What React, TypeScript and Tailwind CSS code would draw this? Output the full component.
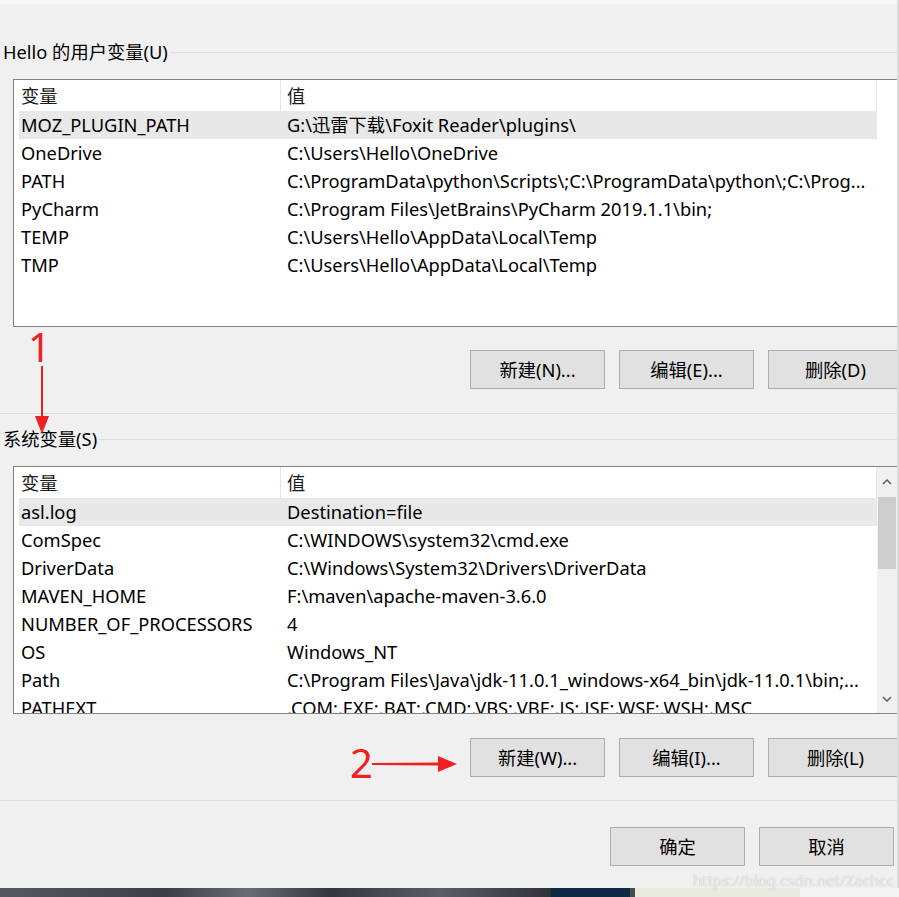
import React from "react";

type Row = { name: string; value: string };

const userVars: Row[] = [
  { name: "MOZ_PLUGIN_PATH", value: "G:\\迅雷下载\\Foxit Reader\\plugins\\" },
  { name: "OneDrive", value: "C:\\Users\\Hello\\OneDrive" },
  { name: "PATH", value: "C:\\ProgramData\\python\\Scripts\\;C:\\ProgramData\\python\\;C:\\Prog..." },
  { name: "PyCharm", value: "C:\\Program Files\\JetBrains\\PyCharm 2019.1.1\\bin;" },
  { name: "TEMP", value: "C:\\Users\\Hello\\AppData\\Local\\Temp" },
  { name: "TMP", value: "C:\\Users\\Hello\\AppData\\Local\\Temp" },
];

const systemVars: Row[] = [
  { name: "asl.log", value: "Destination=file" },
  { name: "ComSpec", value: "C:\\WINDOWS\\system32\\cmd.exe" },
  { name: "DriverData", value: "C:\\Windows\\System32\\Drivers\\DriverData" },
  { name: "MAVEN_HOME", value: "F:\\maven\\apache-maven-3.6.0" },
  { name: "NUMBER_OF_PROCESSORS", value: "4" },
  { name: "OS", value: "Windows_NT" },
  { name: "Path", value: "C:\\Program Files\\Java\\jdk-11.0.1_windows-x64_bin\\jdk-11.0.1\\bin;..." },
  { name: "PATHEXT", value: ".COM;.EXE;.BAT;.CMD;.VBS;.VBE;.JS;.JSE;.WSF;.WSH;.MSC" },
];

function GroupLabel({ text }: { text: string }) {
  return (
    <div className="flex h-[20px] items-center">
      <span className="pl-[3px] pr-[2px] leading-[20px]">{text}</span>
      <div className="h-px flex-1 bg-[#dcdcdc]" />
    </div>
  );
}

function VarList({ rows, scroll }: { rows: Row[]; scroll?: boolean }) {
  return (
    <div className="ml-[13px] flex h-[248px] w-[886px] shrink-0 overflow-hidden border border-[#828282] bg-white">
      <div className="w-[863px] shrink-0">
        <div className="flex h-[31px] items-center text-[#1a1a1a]">
          <div className="w-[266px] pl-[7px]">变量</div>
          <div className="h-full w-px bg-[#e5e5e5]" />
          <div className="flex-1 pl-[6px]">值</div>
          <div className="h-full w-px bg-[#e5e5e5]" />
        </div>
        {rows.map((r, i) => (
          <div
            key={r.name}
            className={
              "ml-[5px] flex h-[28px] items-center whitespace-nowrap " +
              (i === 0 ? "bg-[#e8e8e8]" : "")
            }
          >
            <div className="w-[262px] shrink-0 overflow-hidden pl-[2px]">{r.name}</div>
            <div className="flex-1 overflow-hidden pl-[6px]">{r.value}</div>
          </div>
        ))}
      </div>
      {scroll && (
        <div className="flex w-[20px] shrink-0 flex-col bg-[#f0f0f0]">
          <div className="flex h-[30px] items-center justify-center">
            <svg width="10" height="6" viewBox="0 0 10 6">
              <path d="M1 5 L5 1 L9 5" fill="none" stroke="#606060" strokeWidth="1.5" />
            </svg>
          </div>
          <div className="mx-[1px] h-[72px] bg-[#cdcdcd]" />
          <div className="flex-1" />
          <div className="flex h-[28px] items-center justify-center">
            <svg width="10" height="6" viewBox="0 0 10 6">
              <path d="M1 1 L5 5 L9 1" fill="none" stroke="#606060" strokeWidth="1.5" />
            </svg>
          </div>
        </div>
      )}
    </div>
  );
}

function Btn({ label }: { label: string }) {
  return (
    <div className="flex h-[39px] w-[135px] shrink-0 items-center justify-center border border-[#adadad] bg-[#e1e1e1]">
      {label}
    </div>
  );
}

export default function App() {
  return (
    <div className="relative h-[897px] w-[899px] overflow-hidden bg-[#f0f0f0] font-['Noto_Sans','Noto_Sans_CJK_SC',sans-serif] text-[18.3px] text-black">
      <div className="flex h-[888px]">
        <div className="flex w-[897px] shrink-0 flex-col overflow-hidden">
          <div className="h-[4px] bg-[#f8f8f8]" />
          <div className="mt-[38px]">
            <GroupLabel text="Hello 的用户变量(U)" />
          </div>
          <div className="mt-[17px]">
            <VarList rows={userVars} />
          </div>
          <div className="mt-[23px] flex gap-[14px] pl-[470px]">
            <Btn label="新建(N)..." />
            <Btn label="编辑(E)..." />
            <Btn label="删除(D)" />
          </div>
          <div className="mt-[24px] h-px bg-[#dcdcdc]" />
          <div className="mt-[15px]">
            <GroupLabel text="系统变量(S)" />
          </div>
          <div className="mt-[17px]">
            <VarList rows={systemVars} scroll />
          </div>
          <div className="mt-[24px] flex gap-[14px] pl-[470px]">
            <Btn label="新建(W)..." />
            <Btn label="编辑(I)..." />
            <Btn label="删除(L)" />
          </div>
          <div className="mt-[23px] h-px bg-[#dcdcdc]" />
          <div className="mt-[26px] flex gap-[14px] pl-[610px]">
            <Btn label="确定" />
            <Btn label="取消" />
          </div>
        </div>
        <div className="w-[2px] shrink-0 bg-[#dadada]" />
      </div>

      {/* desktop behind the dialog */}
      <div className="flex h-[9px]">
        <div className="w-[551px] bg-[linear-gradient(90deg,#55585c,#3c3f44_30%,#6a6d70_45%,#34373b_60%,#5b5e62_80%,#2f3237)]" />
        <div className="w-[79px] bg-[#0f2a45]" />
        <div className="w-[5px] bg-[#4a4a4a]" />
        <div className="w-[165px] bg-[#ebeadf]" />
        <div className="flex-1 bg-[#f4f4f4]" />
      </div>

      {/* watermark */}
      <div className="absolute left-[693px] top-[870px] whitespace-nowrap text-[15px] leading-[20px] text-white/80 [text-shadow:0_0_1px_#9a9a9a]">
        https://blog.csdn.net/Zachcc
      </div>

      {/* red annotations */}
      <div className="absolute left-[28px] top-[325px] text-[40px] leading-[44px] text-[#ef2020]">1</div>
      <svg className="absolute left-[33px] top-[366px]" width="18" height="70" viewBox="0 0 18 70">
        <path d="M8 0 L10 0 L10 50 L16 50 L9 68 L2 50 L8 50 Z" fill="#ef2020" />
      </svg>
      <div className="absolute left-[350px] top-[741px] text-[40px] leading-[44px] text-[#ef2020]">2</div>
      <svg className="absolute left-[372px] top-[755px]" width="86" height="18" viewBox="0 0 86 18">
        <path d="M0 8 L66 7.5 L66 1 L85 9 L66 17 L66 10.5 L0 10 Z" fill="#ef2020" />
      </svg>
    </div>
  );
}
